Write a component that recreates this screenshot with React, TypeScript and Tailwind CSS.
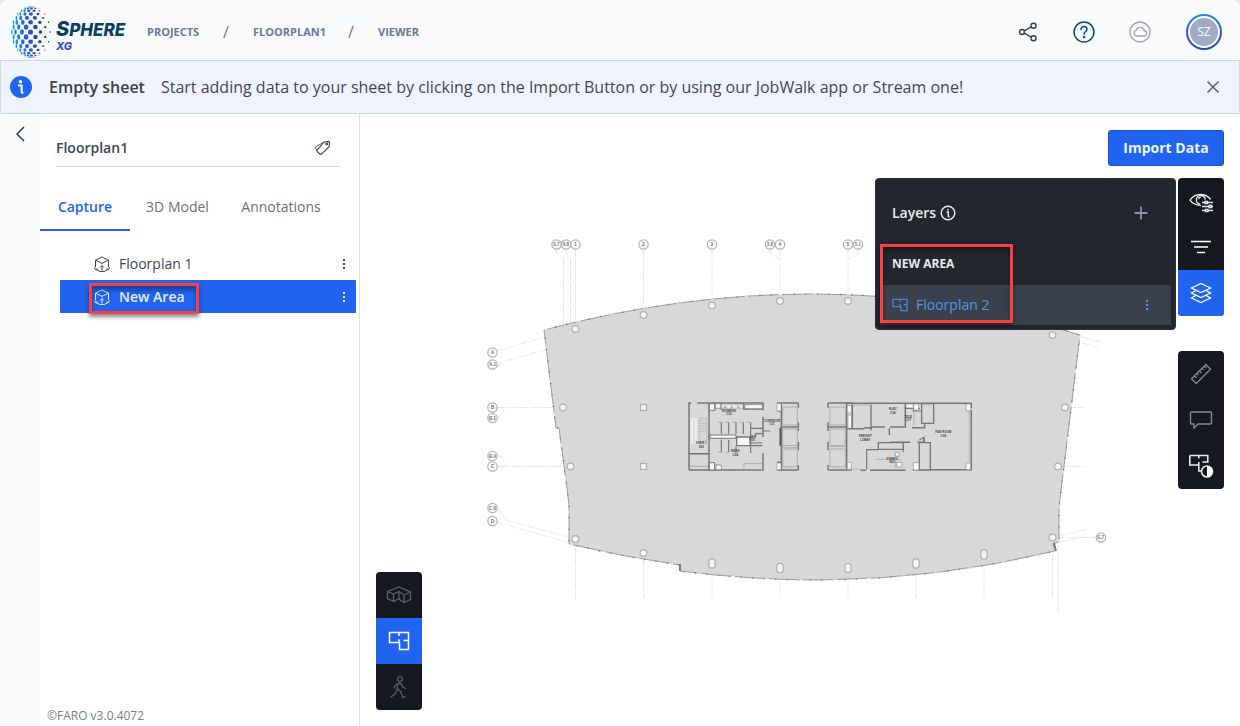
import React from 'react';

type Dot = { x: number; y: number; rx: number; ry: number; fill: string };

// Columns of the globe at the equator: [x, horizontal radius, vertical radius, colour]
const globeColumns: [number, number, number, string][] = [
  [50, 0.8, 0.8, '#17406f'],
  [45.5, 1.2, 1.2, '#174078'],
  [40.5, 1.8, 1.8, '#1b4391'],
  [35.5, 2.3, 2.3, '#2449b4'],
  [30.5, 2.5, 2.6, '#2c50d2'],
  [26, 2.3, 2.7, '#2f57e0'],
  [22, 1.9, 2.8, '#2a68e4'],
  [18.5, 1.6, 2.8, '#2078e0'],
  [15.5, 1.3, 2.8, '#1a8cdf'],
  [13.3, 1, 2.8, '#149cdf'],
  [12, 0.7, 2.6, '#14a8e4'],
];

const globeDots: Dot[] = [];
for (let row = -7; row <= 7; row++) {
  const lat = (row * 11.2 * Math.PI) / 180;
  globeColumns.forEach(([x, rx, ry, fill], col) => {
    if ((col + Math.abs(row)) % 2 === 1) return;
    const c = Math.cos(lat);
    const size = 0.35 + 0.65 * c;
    globeDots.push({
      x: 32 + (x - 32) * c,
      y: 32 + 25.5 * Math.sin(lat),
      rx: rx * size,
      ry: ry * size * (0.3 + 0.7 * c),
      fill,
    });
  });
}

const Logo = () => (
  <a href="#" className="flex items-center gap-[2px]" aria-label="Sphere XG">
    <svg className="w-[46px] h-[56px]" viewBox="8 4 46 56">
      {globeDots.map((d, i) => (
        <ellipse key={i} cx={d.x} cy={d.y} rx={d.rx} ry={d.ry} fill={d.fill} />
      ))}
    </svg>
    <span className="flex w-[72px] flex-col pt-[7px] font-['Inter',sans-serif] font-extrabold italic">
      <span className="text-[17px] leading-5 text-[#0b3f66]">
        <span className="text-xl leading-5">S</span>PHERE
      </span>
      <span className="text-[11px] leading-3 text-[#3a4fd8]">XG</span>
    </span>
  </a>
);

const Header = () => (
  <header className="flex h-[60px] items-center rounded-t-lg bg-[#f8fafb] pl-2 pr-[18px] pt-1">
    <Logo />
    <nav className="ml-[19px] flex flex-1 items-center text-[11px] font-bold text-[#68799b]">
      <a href="#" className="w-[52px]">PROJECTS</a>
      <span className="w-[54px] text-center text-base font-normal text-[#777]">/</span>
      <a href="#" className="w-[71px]">FLOORPLAN1</a>
      <span className="w-[54px] text-center text-base font-normal text-[#777]">/</span>
      <a href="#">VIEWER</a>
    </nav>
    <div className="flex items-center gap-8">
      <button aria-label="Share">
        <svg className="size-6" viewBox="0 0 24 24" fill="none" stroke="#3a4254" strokeWidth="1.4">
          <circle cx="6" cy="12" r="2.5" />
          <circle cx="17.5" cy="5.7" r="2.5" />
          <circle cx="17.5" cy="18.3" r="2.5" />
          <path d="M8.2 10.8l7.1-3.9M8.2 13.2l7.1 3.9" />
        </svg>
      </button>
      <button aria-label="Help">
        <svg className="size-6" viewBox="0 0 24 24" fill="none" stroke="#0b4a78" strokeWidth="1.5">
          <circle cx="12" cy="12" r="10" />
          <path d="M9 9.6c0-2 1.300-3.200 3-3.200s3 1.100 3 2.800c0 2.300-2.900 2.400-2.900 5" strokeLinecap="round" />
          <circle cx="12.100" cy="17" r="0.600" fill="#0b4a78" />
        </svg>
      </button>
      <button aria-label="Sync status">
        <svg className="size-6" viewBox="0 0 24 24" fill="none" stroke="#a3a7ae" strokeWidth="1.4">
          <circle cx="12" cy="12" r="10" />
          <path d="M8.600 16h7.200a2.600 2.600 0 0 0 .5-5.200 4.200 4.200 0 0 0-8.100-.6A3 3 0 0 0 8.600 16z" />
        </svg>
      </button>
      <button
        aria-label="Account"
        className="ml-[2px] flex size-9 items-center justify-center rounded-full bg-gradient-to-b from-[#1690e0] via-[#3a50d8] to-[#1f4fa8] p-[2px]"
      >
        <span className="flex size-8 items-center justify-center rounded-full border-2 border-white bg-[#a1abc4] text-xs text-white">
          SZ
        </span>
      </button>
    </div>
  </header>
);

const Banner = () => (
  <div className="flex min-h-[54px] items-center border border-[#ced5e5] bg-[#eff3fe] pl-[9px] pr-4 text-base text-[#44474d]">
    <svg className="mr-[17px] size-[22px]" viewBox="0 0 22 22">
      <circle cx="11" cy="11" r="11" fill="#2064f0" />
      <circle cx="10.500" cy="5.800" r="1.700" fill="#fff" />
      <path d="M8 9.500h3.600v6.400c0 .8.600 1 1.800.8" fill="none" stroke="#fff" strokeWidth="2" />
    </svg>
    <strong className="mr-4 font-semibold text-[#3c3f45]">Empty sheet</strong>
    <p className="flex-1">
      Start adding data to your sheet by clicking on the Import Button or by using our JobWalk app or Stream one!
    </p>
    <button aria-label="Dismiss">
      <svg className="size-5" viewBox="0 0 20 20" stroke="#5c6068" strokeWidth="1.500">
        <path d="M4.500 4.500l11 11M15.500 4.500l-11 11" />
      </svg>
    </button>
  </div>
);

const CubeIcon = () => (
  <svg className="size-4" viewBox="0 0 16 16" fill="none" stroke="currentColor" strokeWidth="1">
    <path d="M1.500 11V4.200L8 1l6.500 3.200V11M1.500 4.200L8 7.300l6.500-3.100" />
    <path d="M8 7.300v1M8 10v4.500M6 11.500L8 9.500l2 2M6 15.500L1.500 13.500M10 15.500l4.500-2M.5 11.200l1 2.400 2.300-.9M15.500 11.200l-1 2.400-2.300-.9M6 15.500h4" />
  </svg>
);

const MoreIcon = () => (
  <svg className="h-3 w-2" viewBox="0 0 8 12" fill="currentColor">
    <path d="M3 1h2v2H3zM3 5h2v2H3zM3 9h2v2H3z" />
  </svg>
);

const TreeRow = ({ label, selected = false }: { label: string; selected?: boolean }) => (
  <li
    className={`relative flex h-[33px] items-center pl-[34px] pr-2 ${
      selected ? 'bg-[#2064f0] font-semibold text-[#e6edfd]' : 'text-[#3f4556]'
    }`}
  >
    <button className="flex flex-1 items-center gap-[9px]">
      <CubeIcon />
      {label}
    </button>
    <button aria-label={`${label} options`}>
      <MoreIcon />
    </button>
    {selected && (
      <span className="pointer-events-none absolute left-[29px] top-[3px] h-[31px] w-[110px] border-3 border-[#fb4044] shadow-[0_3px_4px_rgba(0,0,0,0.45),inset_0_4px_4px_rgba(0,0,0,0.35)]" />
    )}
  </li>
);

const Sidebar = () => (
  <aside className="flex w-80 shrink-0 flex-col border-r border-[#dfe0e3] bg-white text-sm">
    <div className="ml-4 mr-[19px] flex h-[53px] items-center justify-between border-b border-[#d9dadc] pr-2 pt-4">
      <h1 className="font-semibold text-[#3f4556]">Floorplan1</h1>
      <button aria-label="Labels">
        <svg className="size-5" viewBox="0 0 20 20" fill="none" stroke="#3f4556" strokeWidth="1.100">
          <path d="M5 12.200L12.200 4l4.600-.6.700.7-.4 4.600-7.900 7.700-1 .1-3.200-3.300z" />
          <circle cx="14.800" cy="6" r="0.900" />
          <path d="M3.500 10.600L3 9.500l2-1.400L12.200 4M3.300 9.700l1.800 2.500" strokeWidth="0.900" />
        </svg>
      </button>
    </div>
    <div role="tablist" className="mt-4 flex h-12 text-[#6c6f76]">
      <button role="tab" aria-selected="true" className="w-[90px] border-b-2 border-[#2064f0] pt-[2px] font-semibold text-[#2064f0]">
        Capture
      </button>
      <button role="tab" aria-selected="false" className="w-[95px]">3D Model</button>
      <button role="tab" aria-selected="false" className="w-28">Annotations</button>
    </div>
    <ul className="ml-5 mr-[3px] mt-4">
      <TreeRow label="Floorplan 1" />
      <TreeRow label="New Area" selected />
    </ul>
    <footer className="mt-auto pb-[2px] pl-[7px] text-xs text-[#7b7d82]">©FARO v3.0.4072</footer>
  </aside>
);

const bubbles: [number, number, string][] = [
  [556.5, 244.5, '0.7'],
  [566, 244.5, '0.8'],
  [575.5, 244.5, '1'],
  [643.5, 244.5, '2'],
  [712, 244.5, '3'],
  [770, 244.5, '3.8'],
  [780, 244.5, '4'],
  [848, 244.5, '5'],
  [858, 244.5, '5.1'],
  [492.5, 352.5, 'A'],
  [492.5, 364.5, 'A.1'],
  [492.5, 407.5, 'B'],
  [492.5, 418, 'B.1'],
  [492.5, 456, 'B.9'],
  [492.5, 466.5, 'C'],
  [492.5, 508, 'C.8'],
  [492.5, 521, 'D'],
  [1101, 537.5, 'E.7'],
];

const roundColumns = [
  [575.5, 329], [643.5, 315], [712, 305.5], [780, 301], [848, 301], [1052.5, 335],
  [563, 407.5], [570.5, 466.5], [1065, 407.5], [1058, 466.5],
  [575.5, 539], [643.5, 553], [1052.5, 537.5],
];

const ovalColumns = [[712, 563.5], [780, 568], [848, 568], [916, 563.5], [984, 554.5]];

const roomLabels: [number, number, string, string][] = [
  [177, 80, 'WOMENS', 'C03'],
  [306, 110, 'CORRIDOR', 'C01'],
  [94, 178, 'STAIR 1', 'S01'],
  [196, 202, 'MENS', 'C04'],
  [247, 158, 'JAN', 'C05'],
  [669, 76, 'ELEC', 'C06'],
  [715, 98, 'TELE', 'C07'],
  [586, 157, 'FREIGHT', 'LOBBY'],
  [666, 224, 'STAIR 2', 'S02'],
  [820, 145, 'FAN ROOM', 'C08'],
];

const outline =
  'M544 330Q680 294 812 294Q950 294 1080 335L1059 507V542L1053 543.500L1055 551Q940 579 820 580Q750 580 680 571V565Q624 557 569 544V505L567 488L559 428H556Z';

const Floorplan = () => (
  <svg
    className="absolute inset-0 size-full"
    viewBox="360 114 880 612"
    fill="none"
    fontFamily="Liberation Sans, sans-serif"
    role="img"
    aria-label="Floorplan 2"
  >
    {/* Grid lines */}
    <g stroke="#e0e0e0" strokeWidth="0.8" strokeDasharray="7 1.500 2 1.500">
      <path d="M556.500 249v4l7 5v66M566 249v4l4.500 4v66M575.500 249v74M643.500 249v62M712 249v52M770 249v5l10 5v38M780 249v10M848 249v48M858 249v5l-10 5" />
      <path d="M497 351l47-14M497 367l5-5 43-12M497 407.500h62M498 418l8-10.500M497 456h4l5 10.500h60M497 466.500h9M498 509l8 11 62 17M497 522l72 21" />
      <path d="M575.500 544v55M643.500 558v41M712 570v29M780 573v26M848 573v26M916 569v30M984 559v40M1052.500 542v57M1058 545v68" />
      <path d="M1082 337l19 5M1082 343l16 4M1069 407.500h15M1062 466.500h22M1057 537.500h39M1057 536l28-6M1060 542l24-5" />
    </g>

    {/* Slab */}
    <path d={outline} fill="#d8d8d8" stroke="#9c9c9c" strokeWidth="1" />
    <path d={outline} stroke="#7c7c7c" strokeWidth="1.600" strokeDasharray="1 10.500" />
    <path d={outline} stroke="#f4f4f4" strokeWidth="1" strokeDasharray="4 30" />
    <path d="M680 564v7M1054 543l2 8" stroke="#777" strokeWidth="1.800" />

    <g fill="#f4f4f4" stroke="#b0b0b0" strokeWidth="1.200">
      {roundColumns.map(([x, y]) => (
        <circle key={`${x}-${y}`} cx={x} cy={y} r="3.400" />
      ))}
      {ovalColumns.map(([x, y]) => (
        <rect key={x} x={x - 3.2} y={y - 4.7} width="6.400" height="9.400" rx="3" />
      ))}
      <rect x="640.500" y="404.500" width="6" height="6" />
      <rect x="640.500" y="463.500" width="6" height="6" />
    </g>

    {bubbles.map(([x, y, label]) => (
      <g key={`${x}-${y}`}>
        <circle cx={x} cy={y} r="4.700" fill="#fafafa" stroke="#b2b2b2" strokeWidth="1.200" />
        <text x={x} y={y + 1.7} fontSize={label.length > 1 ? 4.5 : 5} fontWeight="bold" textAnchor="middle" fill="#777">
          {label}
        </text>
      </g>
    ))}

    {/* Building core, drawn at three units per pixel */}
    <g transform="translate(670 385) scale(.3333)" stroke="#777" strokeWidth="3.500">
      {/* West block */}
      <path d="M64 54h-7v201M82 54h197v22M57 206h60M57 255h222v-50M117 54v201M279 96v60M120 74h14v-18M154 56v18M221 56v16h56" strokeWidth="4.500" />
      <path d="M62 100h20v76H62z" fill="#eee" stroke="none" />
      <path d="M88 100h22v68H88z" stroke="#aaa" strokeWidth="1.500" />
      <path d="M72 105v68M88 108h22M88 116h22M88 124h22M88 132h22M88 140h22" stroke="#aaa" strokeWidth="1.500" />
      <path d="M120 150h78v10h-78z" fill="#f5f5f5" strokeWidth="3" />
      <path d="M200 156h40v26h-40z" fill="#f8f8f8" strokeWidth="4" />
      <path d="M154 112v34M176 112v34M198 112v34M220 112v34M242 112v92M154 164v38M176 164v38M198 184v20M242 130h37M242 182h35M257 156v-10h22M279 138h22M242 174h35" />
      <path d="M144 112h10M166 112h10M188 112h10M211 112h10M232 112h10M144 202h10M166 202h10" stroke="#999" strokeWidth="2" />
      <path d="M154 58h65v12h-65z" fill="#ececec" stroke="#999" strokeWidth="1.500" />
      <circle cx="165" cy="66" r="3" strokeWidth="1.500" />
      <circle cx="185" cy="66" r="3" strokeWidth="1.500" />
      <circle cx="205" cy="66" r="3" strokeWidth="1.500" />
      <path d="M225 59h52v12h-52zM136 56h16v14h-16zM138 240h16v14h-16z" fill="#f5f5f5" strokeWidth="2" />
      <path d="M222 236h56v18h-56zM58 244h58" stroke="#999" strokeWidth="2" />
      <path d="M118 56h16v20h-16zM118 233h16v22h-16z" fill="#f8f8f8" strokeWidth="3" />

      {/* Elevator banks */}
      <path d="M321 54h64M321 255h64M334 54v201M385 54v14M385 112v26M385 170v26M385 240v15M334 126h51M334 186h51M321 78h12M321 232h12" strokeWidth="4.500" />
      <path d="M331 128v54" stroke="#555" strokeWidth="5" />
      <path d="M338 66h44v54h-44zM338 132h44v50h-44zM338 192h44v54h-44z" stroke="#999" strokeWidth="2" />
      <path d="M321 56h12v22h-12zM321 234h12v20h-12zM338 183h44v5h-44z" fill="#f8f8f8" stroke="#999" strokeWidth="2" />
      <path d="M474 54v14M474 112v26M474 170v26M474 240v15M530 54v201M474 54h72M474 255h72M474 126h56" strokeWidth="4.500" />
      <path d="M480 66h46v54h-46zM480 132h46v50h-46zM480 192h46v54h-46zM474 184h56" stroke="#999" strokeWidth="2" />
      <path d="M532 62h13v22h-13zM534 90h11v40h-11zM532 232h12v22h-12z" fill="#f5f5f5" stroke="#999" strokeWidth="2" />

      {/* East block */}
      <path d="M530 55h374v15M530 131h53M583 128h14l6 4v-73M547 58v73M604 126h41M660 126h46v-70M726 128h38v-10M658 130v20M661 172h59M742 172h20v-12M904 76v178H782M728 254h22M572 256h16M600 256h107" strokeWidth="4.500" />
      <path d="M898 76v176M550 60h52v66M532 252h40" stroke="#aaa" strokeWidth="2" />
      <path d="M755 56h36v59h-36zM748 173h33v82h-33z" strokeWidth="4" />
      <path d="M625 173h75v20h-75z" strokeWidth="4" />
      <path d="M590 254v-60h36M700 193v8M706 70h44M730 70v8h24M748 165l14-8v14" />
      <path d="M732 78v44M676 200v50M618 223h74" stroke="#999" strokeWidth="2" />
      <path d="M676 202h12v12h-12zM680 232h16v14h-16zM708 57h22v12h-22zM731 57h15v18h-15zM888 57h14v20h-14zM888 234h14v20h-14zM730 233h17v22h-17z" fill="#f8f8f8" stroke="#888" strokeWidth="2" />

      <g fill="#444" stroke="none" fontSize="9" fontWeight="bold" textAnchor="middle">
        {roomLabels.map(([x, y, name, code]) => (
          <text key={code} x={x} y={y}>
            {name}
            <tspan x={x} dy="10">{code}</tspan>
          </text>
        ))}
      </g>
    </g>
  </svg>
);

const PlanIcon = () => (
  <svg className="size-6" viewBox="0 0 24 24" fill="none" stroke="currentColor" strokeWidth="1.500">
    <path d="M2.500 3.500h19v17h-9v-7h-10zM12 3.500v3.500M12 10.500v3.500M21.500 11.500h-5M12.500 11h-1" />
  </svg>
);

const LayersPanel = () => (
  <section className="relative h-[152px] w-[301px] rounded-[4px] border border-[#2c303d] bg-[#22262e] px-1 text-sm text-[#e8eaee]">
    <div className="flex h-[68px] items-center pl-3 pr-[22px]">
      <h2 className="font-semibold">Layers</h2>
      <svg className="ml-1 size-4" viewBox="0 0 16 16" fill="none" stroke="currentColor" strokeWidth="1.400">
        <circle cx="8" cy="8" r="6.800" />
        <path d="M6.500 7h1.800v4.500h1.400M8 3.900v1.500" />
      </svg>
      <button aria-label="Add layer" className="ml-auto">
        <svg className="size-4" viewBox="0 0 16 16" stroke="#8d94a8" strokeWidth="1.800">
          <path d="M8 1.500v13M1.500 8h13" />
        </svg>
      </button>
    </div>
    <h3 className="flex h-[38px] items-center pb-1 pl-3 text-xs font-bold">NEW AREA</h3>
    <div className="flex h-10 items-center bg-[#3a404b] pl-3 pr-5 text-[#5196ea]">
      <button className="flex flex-1 items-center gap-2">
        <svg className="size-4" viewBox="0 0 24 24" fill="none" stroke="currentColor" strokeWidth="1.600">
          <path d="M1.500 3.500h21v17h-9v-6h-12zM12 3.500v3.500M12 10.500v4M22.500 11.500h-5" />
        </svg>
        Floorplan 2
      </button>
      <button aria-label="Floorplan 2 options">
        <MoreIcon />
      </button>
    </div>
    <span className="pointer-events-none absolute left-1 top-[65px] h-[79px] w-[133px] border-3 border-[#fb4044] shadow-[0_3px_4px_rgba(0,0,0,0.4),inset_0_4px_4px_rgba(0,0,0,0.35)]" />
  </section>
);

const ToolButton = ({
  label,
  className = '',
  children,
}: {
  label: string;
  className?: string;
  children: React.ReactNode;
}) => (
  <button aria-label={label} className={`flex size-[46px] items-center justify-center ${className}`}>
    {children}
  </button>
);

const ToolGroup = ({ children }: { children: React.ReactNode }) => (
  <div className="flex w-[46px] flex-col overflow-hidden rounded-[4px] bg-[#15181f] text-white">{children}</div>
);

const RightTools = () => (
  <div className="flex flex-col gap-[35px]">
    <ToolGroup>
      <ToolButton label="View settings">
        <svg className="size-7" viewBox="0 0 28 28" fill="none" stroke="#e8e8ea" strokeWidth="1.300">
          <path d="M14 18.500C8.500 18 4.500 15.500 3 13.200 5 10 9 7.500 13.500 7.500s8.300 2.500 10.200 5" />
          <path d="M13 17.200a4.400 4.400 0 1 1 5.200-4.500" />
          <path d="M11.500 12a2.500 2.500 0 0 1 2.300-2" />
          <path d="M15 15.500h11M15 19.500h11M15 23.500h11" />
          <path d="M18 14.500h2.500v2H18zM22 18.500h2.500v2H22zM18.500 22.500H21v2h-2.500z" fill="#15181f" />
        </svg>
      </ToolButton>
      <ToolButton label="Filter">
        <svg className="size-6" viewBox="0 0 24 24" stroke="#fff" strokeWidth="1.500">
          <path d="M2 6.500h20M5 12h14M8 17.500h8" />
        </svg>
      </ToolButton>
      <ToolButton label="Layers" className="bg-[#2064f0]">
        <svg className="size-6" viewBox="0 0 24 24" fill="none" stroke="#fff" strokeWidth="1.300">
          <path d="M12 2.500l9.500 4.500-9.500 4.500L2.500 7z" />
          <path d="M6.500 9.700l-4 2.300 9.500 4.500 9.500-4.500-4-2.300M6.500 14.700l-4 2.300 9.500 4.500 9.500-4.500-4-2.300" />
        </svg>
      </ToolButton>
    </ToolGroup>
    <ToolGroup>
      <ToolButton label="Measure" className="text-[#86888d]">
        <svg className="size-6" viewBox="0 0 24 24" fill="none" stroke="currentColor" strokeWidth="1.300">
          <path d="M2.500 16.800L16.800 2.500l4.700 4.700L7.200 21.500zM5.500 14l2 2M8 11.500l1.500 1.500M10.500 9l2 2M13 6.500L14.500 8M15.300 4.300l1.700 1.700" />
        </svg>
      </ToolButton>
      <ToolButton label="Annotate" className="text-[#86888d]">
        <svg className="size-6" viewBox="0 0 24 24" fill="none" stroke="currentColor" strokeWidth="1.400">
          <path d="M2.500 4h19a1 1 0 0 1 1 1v10a1 1 0 0 1-1 1H9l-4 4v-4H2.500a1 1 0 0 1-1-1V5a1 1 0 0 1 1-1z" />
        </svg>
      </ToolButton>
      <ToolButton label="Plan contrast">
        <svg className="size-7" viewBox="0 0 28 28" fill="none" stroke="#e8e8ea" strokeWidth="1.600">
          <path d="M2.800 3.500h18v6.500h-5.300M2.800 3.500v9.500h9v6h3M11.800 3.500v3M11.800 10v3" />
          <circle cx="20" cy="19.500" r="5.500" />
          <path d="M20 14a5.500 5.500 0 0 1 0 11z" fill="#fff" stroke="none" />
        </svg>
      </ToolButton>
    </ToolGroup>
  </div>
);

const ViewModes = () => (
  <ToolGroup>
    <ToolButton label="3D view" className="text-[#5c5f65]">
      <svg className="size-7" viewBox="0 0 28 28" fill="none" stroke="currentColor" strokeWidth="1.300">
        <path d="M2.500 10.500L14 6l11.500 5v7.500l-6.500 3-5.500-3.500-5 2.500-6-3zM2.500 10.500l6 2.500 5.500-2.500 5 3.500 6.500-3M8.500 13v7.500M14 10.500V18M19 14v7.500" />
      </svg>
    </ToolButton>
    <ToolButton label="Plan view" className="bg-[#2064f0]">
      <PlanIcon />
    </ToolButton>
    <ToolButton label="Walk view" className="text-[#5c5f65]">
      <svg className="size-6" viewBox="0 0 24 24" fill="none" stroke="currentColor" strokeWidth="1.300" strokeLinecap="round" strokeLinejoin="round">
        <circle cx="13" cy="4" r="2.400" />
        <path d="M7 13l2-3.500 3.500-1.300 2 1 1.200 2.800 2.800 1.500" />
        <path d="M11 9.500l-1 4 4 3.500 1.500 5h2.500M10 14.500l-2 4.500-4 3" />
      </svg>
    </ToolButton>
  </ToolGroup>
);

const Viewer = () => (
  <main className="relative flex min-w-0 flex-1 flex-col justify-between bg-white p-4">
    <Floorplan />
    <div className="relative flex flex-col items-end gap-3">
      <button className="h-9 w-[116px] rounded-[3px] border border-[#1750cc] bg-[#2064f0] text-sm font-bold text-[#eef3ff]">
        Import Data
      </button>
      <div className="flex items-start gap-[2px]">
        <LayersPanel />
        <RightTools />
      </div>
    </div>
    <div className="relative">
      <ViewModes />
    </div>
  </main>
);

const App = () => {
  return (
    <div className="flex min-h-screen flex-col bg-[#e6e6e6] font-['Open_Sans','Noto_Sans',sans-serif]">
      <Header />
      <Banner />
      <div className="flex flex-1 bg-white">
        <div className="flex w-10 shrink-0 flex-col items-center bg-[#f8fafb] pt-3">
          <button aria-label="Collapse sidebar">
            <svg className="h-4 w-3" viewBox="0 0 12 16" fill="none" stroke="#343a4c" strokeWidth="1.500">
              <path d="M10 1L3 8l7 7" />
            </svg>
          </button>
        </div>
        <Sidebar />
        <Viewer />
      </div>
    </div>
  );
};

export default App;
